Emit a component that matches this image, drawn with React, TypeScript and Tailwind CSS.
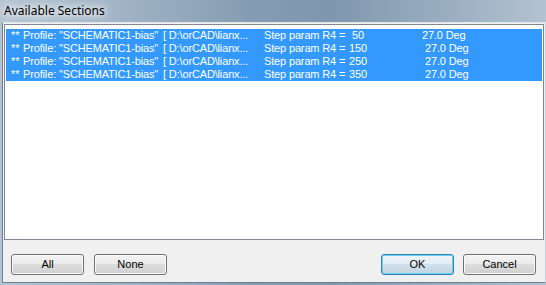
import React from "react";

const rows = [
  { v: "50", vCls: "w-[73px] pl-[3px]" },
  { v: "150", vCls: "w-[76px]" },
  { v: "250", vCls: "w-[76px]" },
  { v: "350", vCls: "w-[76px]" },
];

function Btn({ label, def }: { label: string; def?: boolean }) {
  return (
    <div
      className={
        def
          ? "w-[73px] h-[21px] rounded-[3px] border border-[#3c7fb1] shadow-[inset_0_0_0_1px_#5fd4f7] bg-[linear-gradient(180deg,#eef5fa_0%,#e2ecf3_50%,#d2e0ea_50%,#c3d4e0_100%)] flex items-center justify-center text-[11px] text-black"
          : "w-[73px] h-[21px] rounded-[3px] border border-[#707070] shadow-[inset_0_0_0_1px_#fbfbfb] bg-[linear-gradient(180deg,#f2f2f2_0%,#ebebeb_50%,#dddddd_50%,#cfcfcf_100%)] flex items-center justify-center text-[11px] text-black"
      }
    >
      {label}
    </div>
  );
}

export default function App() {
  return (
    <div
      className="w-[546px] h-[285px] flex flex-col overflow-hidden bg-[linear-gradient(90deg,#b4c4d3_0%,#a3b6c8_20%,#859db2_45%,#7e97ad_60%,#97acbf_80%,#b3c2d0_100%)]"
      style={{ fontFamily: '"Liberation Sans", Arial, sans-serif' }}
    >
      <div className="h-[22px] flex items-center pl-[4px] shrink-0">
        <span
          className="text-[12px] text-black [text-shadow:0_0_6px_#ffffff,0_0_10px_#ffffff,0_0_14px_#ffffff]"
          style={{ fontFamily: '"Noto Sans", "Open Sans", sans-serif' }}
        >
          Available Sections
        </span>
      </div>
      <div className="flex flex-1 min-h-0">
        <div className="w-[2px] shrink-0" />
        <div className="flex-1 flex flex-col bg-[#f0f0f0] border-l border-b border-t border-[#6e7f90] border-t-[#dfe6ec] border-r border-r-[#c8d2dc]">
          <div className="mt-[1px] mx-[1px] h-[216px] border border-[#828790] bg-white pt-[4px] px-[1px] shrink-0">
            {rows.map((r, i) => (
              <div
                key={i}
                className="h-[13px] leading-[13px] bg-[#3399ff] text-white text-[11px] whitespace-pre flex pl-[5px] tracking-[-0.15px]"
              >
                <span className="w-[12px] shrink-0">**</span>
                <span className="w-[140px] shrink-0">Profile: "SCHEMATIC1-bias"</span>
                <span className="w-[101px] shrink-0">[ D:\orCAD\lianx...</span>
                <span className="w-[85px] shrink-0">Step param R4 =</span>
                <span className={r.vCls + " shrink-0"}>{r.v}</span>
                <span className="shrink-0">27.0 Deg</span>
              </div>
            ))}
          </div>
          <div className="mt-[14px] flex items-start pl-[8px] pr-[9px]">
            <Btn label="All" />
            <div className="w-[10px]" />
            <Btn label="None" />
            <div className="flex-1" />
            <Btn label="OK" def />
            <div className="w-[9px]" />
            <Btn label="Cancel" />
          </div>
        </div>
      </div>
      <div className="h-[2px] shrink-0" />
    </div>
  );
}
